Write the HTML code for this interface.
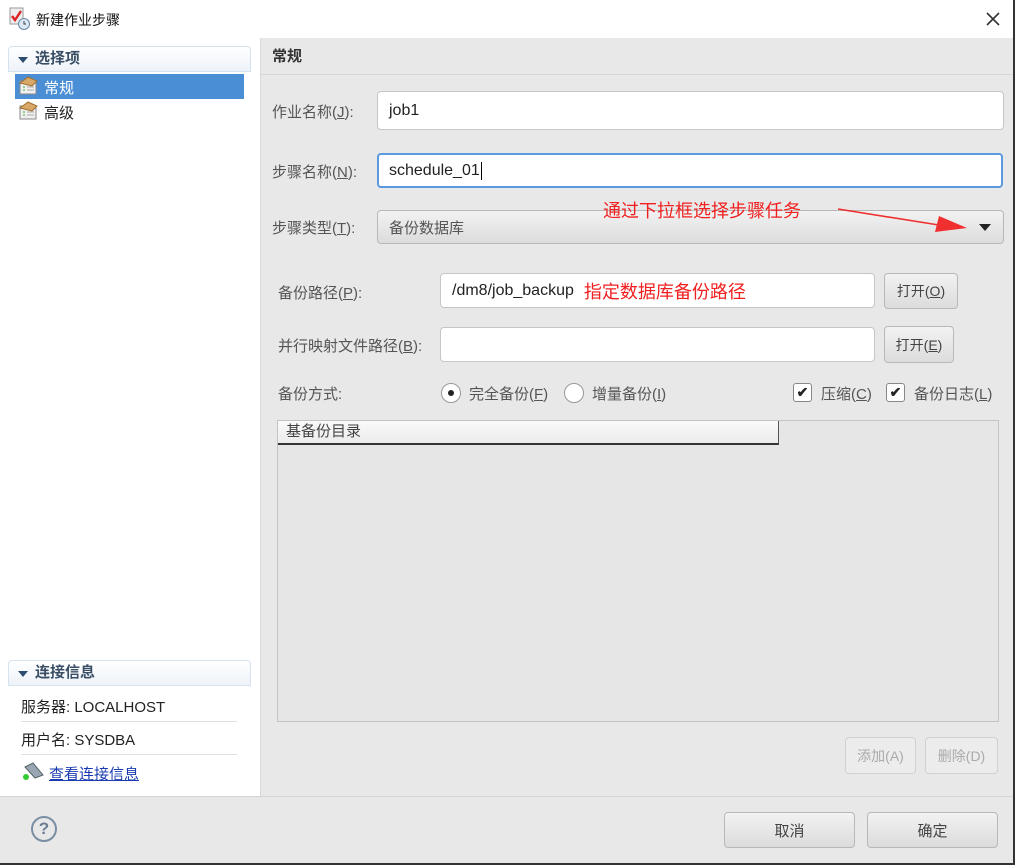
<!DOCTYPE html>
<html><head><meta charset="utf-8"><style>
*{box-sizing:border-box;margin:0;padding:0}
body{width:1015px;height:865px;position:relative;overflow:hidden;background:#e8e8e8;font-family:"Liberation Sans","Noto Sans CJK SC",sans-serif;color:#333;font-size:14px}
.a{position:absolute;white-space:nowrap}
.inp{position:absolute;background:#fff;border:1px solid #c6c6c6;border-radius:4px;padding-left:11px;font-size:16px;color:#222;display:flex;align-items:center}
.btn{position:absolute;border:1px solid #b8b8b8;border-radius:4px;background:linear-gradient(#f2f2f2,#dcdcdc);display:flex;align-items:center;justify-content:center;font-size:14px;color:#444}
.lbl{position:absolute;font-size:15px;color:#555;white-space:nowrap}
.hdr{position:absolute;left:8px;width:243px;height:26px;border:1px solid #d5e2ef;border-radius:4px 4px 0 0;background:linear-gradient(#fff,#eef3f9);font-weight:bold;font-size:15px;color:#3a4f66;padding-left:26px;line-height:24px}
.hdr:before{content:"";position:absolute;left:9px;top:10px;border-left:5px solid transparent;border-right:5px solid transparent;border-top:6px solid #2d4d6e}
.red{color:#f02020;font-size:18px}
.chk{position:absolute;width:19px;height:19px;border:1px solid #888;border-radius:3px;background:#fff;text-align:center;line-height:17px;font-size:14px;font-weight:bold;color:#222}
</style></head><body>
<div class="a" style="left:0;top:0;width:1015px;height:38px;background:#fff"></div>
<svg class="a" style="left:9px;top:7px" width="22" height="24"><rect x="1" y="1" width="13" height="16" fill="#eee" stroke="#999"/><path d="M3 9l3 4 6-9" stroke="#d22" stroke-width="2.4" fill="none"/><circle cx="15" cy="17" r="5.5" fill="#dde8f3" stroke="#6a88a8"/><path d="M15 14v3h2" stroke="#345" fill="none"/></svg>
<div class="a" style="left:36px;top:10px;font-size:14px;color:#111">新建作业步骤</div>
<svg class="a" style="left:986px;top:12px" width="14" height="14"><path d="M1 1L13 13M13 1L1 13" stroke="#333" stroke-width="1.6"/></svg>
<div class="a" style="left:0;top:38px;width:261px;height:758px;background:#fff;border-right:1px solid #d8d8d8"></div>
<div class="hdr" style="top:46px">选择项</div>
<div class="a" style="left:15px;top:74px;width:229px;height:25px;background:#4a8fd6"></div>
<svg class="a" style="left:18px;top:76px" width="22" height="20"><rect x="2" y="5" width="16" height="13" fill="#f0f0f0" stroke="#888"/><path d="M2 7l8-6 9 4-5 5z" fill="#d8a868" stroke="#a06e30"/><path d="M5 11h2M5 14h2" stroke="#4a4"/><path d="M9 11h7M9 14h7" stroke="#aaa"/></svg>
<div class="a" style="left:44px;top:77px;color:#fff;font-size:15px">常规</div>
<svg class="a" style="left:18px;top:101px" width="22" height="20"><rect x="2" y="5" width="16" height="13" fill="#f0f0f0" stroke="#888"/><path d="M2 7l8-6 9 4-5 5z" fill="#d8a868" stroke="#a06e30"/><path d="M5 11h2M5 14h2" stroke="#4a4"/><path d="M9 11h7M9 14h7" stroke="#aaa"/></svg>
<div class="a" style="left:44px;top:102px;color:#222;font-size:15px">高级</div>
<div class="hdr" style="top:660px">连接信息</div>
<div class="a" style="left:21px;top:696px;font-size:15px;color:#222">服务器: LOCALHOST</div>
<div class="a" style="left:21px;top:721px;width:216px;height:1px;background:#e0e0e0"></div>
<div class="a" style="left:21px;top:729px;font-size:15px;color:#222">用户名: SYSDBA</div>
<div class="a" style="left:21px;top:754px;width:216px;height:1px;background:#e0e0e0"></div>
<svg class="a" style="left:21px;top:761px" width="24" height="20"><path d="M4 6l8-4 10 12-8 3z" fill="#9aa6b4" stroke="#566"/><circle cx="5" cy="16" r="3" fill="#3c3"/></svg>
<div class="a" style="left:49px;top:763px;font-size:15px;color:#1a3cb0;text-decoration:underline">查看连接信息</div>
<div class="a" style="left:261px;top:38px;width:754px;height:37px;border-bottom:1px solid #d6d6d6"></div>
<div class="a" style="left:272px;top:45px;font-weight:bold;font-size:15px;color:#333">常规</div>
<div class="lbl" style="left:272px;top:101px">作业名称(<u>J</u>):</div>
<div class="inp" style="left:377px;top:91px;width:627px;height:39px">job1</div>
<div class="lbl" style="left:272px;top:161px">步骤名称(<u>N</u>):</div>
<div class="inp" style="left:377px;top:153px;width:626px;height:35px;border:2px solid #5b9ae0;padding-left:10px">schedule_01<span style="border-left:1px solid #000;height:18px;margin-left:1px"></span></div>
<div class="lbl" style="left:272px;top:217px">步骤类型(<u>T</u>):</div>
<div class="btn" style="left:377px;top:210px;width:627px;height:34px;justify-content:flex-start;padding-left:11px;font-size:15px;color:#555">备份数据库</div>
<div class="a" style="left:979px;top:224px;border-left:6px solid transparent;border-right:6px solid transparent;border-top:7px solid #222"></div>
<div class="a red" style="left:603px;top:197px">通过下拉框选择步骤任务</div>
<svg class="a" style="left:835px;top:205px" width="135" height="30"><path d="M3 4L110 21" stroke="#f03030" stroke-width="1.6"/><path d="M104 11L132 23 100 27z" fill="#f03030"/></svg>
<div class="lbl" style="left:278px;top:282px">备份路径(<u>P</u>):</div>
<div class="inp" style="left:440px;top:273px;width:435px;height:35px">/dm8/job_backup<span class="red" style="margin-left:10px">指定数据库备份路径</span></div>
<div class="btn" style="left:884px;top:273px;width:74px;height:36px">打开(<u>O</u>)</div>
<div class="lbl" style="left:278px;top:335px">并行映射文件路径(<u>B</u>):</div>
<div class="inp" style="left:440px;top:327px;width:435px;height:35px"></div>
<div class="btn" style="left:884px;top:326px;width:70px;height:37px">打开(<u>E</u>)</div>
<div class="lbl" style="left:278px;top:383px">备份方式:</div>
<div class="a" style="left:441px;top:383px;width:20px;height:20px;border:1px solid #999;border-radius:50%;background:#fff"></div>
<div class="a" style="left:448px;top:390px;width:6px;height:6px;border-radius:50%;background:#222"></div>
<div class="lbl" style="left:469px;top:383px">完全备份(<u>F</u>)</div>
<div class="a" style="left:564px;top:383px;width:20px;height:20px;border:1px solid #999;border-radius:50%;background:#fff"></div>
<div class="lbl" style="left:592px;top:383px">增量备份(<u>I</u>)</div>
<div class="chk" style="left:793px;top:383px">✔</div>
<div class="lbl" style="left:821px;top:383px">压缩(<u>C</u>)</div>
<div class="chk" style="left:886px;top:383px">✔</div>
<div class="lbl" style="left:914px;top:383px">备份日志(<u>L</u>)</div>
<div class="a" style="left:277px;top:420px;width:722px;height:302px;border:1px solid #c4c4c4;background:#e6e6e6"></div>
<div class="a" style="left:278px;top:421px;width:501px;height:24px;border-bottom:2px solid #333;border-right:1px solid #555;background:linear-gradient(#fafafa,#ececec);padding-left:8px;font-size:15px;color:#444;line-height:22px">基备份目录</div>
<div class="btn" style="left:845px;top:737px;width:71px;height:37px;color:#aaa;background:#ececec;border-color:#d0d0d0">添加(A)</div>
<div class="btn" style="left:925px;top:737px;width:73px;height:37px;color:#aaa;background:#ececec;border-color:#d0d0d0">删除(D)</div>
<div class="a" style="left:0;top:796px;width:1015px;height:1px;background:#d4d4d4"></div>
<div class="a" style="left:31px;top:816px;width:26px;height:26px;border:2px solid #7a8ea4;border-radius:50%;text-align:center;font-weight:bold;font-size:17px;line-height:22px;color:#6a7e94">?</div>
<div class="btn" style="left:724px;top:812px;width:131px;height:36px;font-size:15px">取消</div>
<div class="btn" style="left:867px;top:812px;width:131px;height:36px;font-size:15px">确定</div>
<div class="a" style="left:1013px;top:0;width:2px;height:865px;background:#333"></div>
<div class="a" style="left:0;top:863px;width:1015px;height:2px;background:#333"></div>
</body></html>
